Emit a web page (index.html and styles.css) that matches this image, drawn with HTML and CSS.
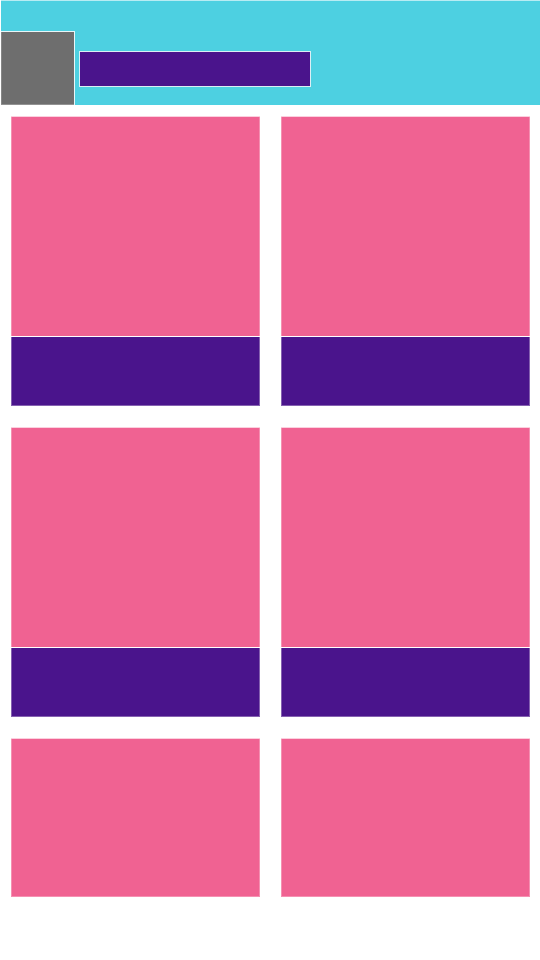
FILE: index.html
```html
<!DOCTYPE html>
<html lang="en">
<head>
<meta charset="utf-8">
<meta name="viewport" content="width=device-width, initial-scale=1">
<title>Gallery wireframe</title>
<link rel="stylesheet" href="styles.css">
</head>
<body>
<header class="toolbar">
  <div class="toolbar-icon"></div>
  <div class="toolbar-title"></div>
</header>
<main class="grid">
  <article class="card"><div class="image"></div><div class="caption"></div></article>
  <article class="card"><div class="image"></div><div class="caption"></div></article>
  <article class="card"><div class="image"></div><div class="caption"></div></article>
  <article class="card"><div class="image"></div><div class="caption"></div></article>
  <article class="card"><div class="image image-short"></div></article>
  <article class="card"><div class="image image-short"></div></article>
</main>
</body>
</html>
```
FILE: styles.css
```css
* {
  box-sizing: border-box;
}

body {
  margin: 0;
  background: #fff;
}

.toolbar {
  display: flex;
  align-items: flex-end;
  gap: 4px;
  height: 105px;
  margin-left: 1px;
  background: #4dd0e1;
  border-top: 1px solid #b8ecf3;
}

.toolbar-icon {
  width: 74px;
  height: 74px;
  background: #6e6e6e;
  border-top: 1px solid #e9f6f8;
  border-right: 1px solid #e9f6f8;
  box-shadow: inset 0 -1px #929292, inset 1px 0 #868686;
}

.toolbar-title {
  width: 232px;
  height: 36px;
  margin-bottom: 18px;
  background: #4a148c;
  border: 1px solid #dceff5;
}

.grid {
  display: grid;
  grid-template-columns: 1fr 1fr;
  gap: 22px 21px;
  padding: 12px 10px 24px 11px;
}

.card {
  display: grid;
  gap: 1px;
  align-content: start;
}

.image {
  height: 219px;
  background: #f06292;
  border: solid #f590b2;
  border-width: 0 1px;
  box-shadow: 0 -1px #fbd0de;
}

.image-short {
  height: 158px;
  border-bottom-width: 1px;
}

.caption {
  height: 69px;
  background: #4a148c;
  border: solid #8561b0;
  border-width: 0 1px 1px;
}
```
